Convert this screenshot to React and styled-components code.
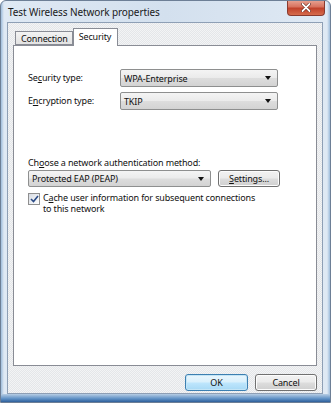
import React from "react";
import styled, { createGlobalStyle } from "styled-components";

const Global = createGlobalStyle`
  html, body { margin: 0; padding: 0; background: #ffffff; }
  body { font-family: "Noto Sans", "Open Sans", sans-serif; }
`;

const Window = styled.div`
  width: 331px;
  height: 403px;
  box-sizing: border-box;
  border: 1px solid #6d7f96;
  border-radius: 6px 6px 0 0;
  background: linear-gradient(90deg, #9fbddc 0px, #dfe9f4 3px, #d3e0ee 50%, #dfe9f4 calc(100% - 3px), #9fbddc 100%);
  display: flex;
  flex-direction: column;
  position: relative;
  overflow: hidden;
  &::after {
    content: "";
    position: absolute;
    left: 0; right: 0; bottom: 0; height: 8px;
    background: linear-gradient(180deg, #b7cde4 0%, #5d8fc4 60%, #2f5f9a 100%);
  }
`;

const TitleBar = styled.div`
  height: 21px;
  display: flex;
  align-items: flex-start;
  justify-content: space-between;
  padding-left: 7px;
  flex: none;
`;

const Title = styled.div`
  font-size: 10px;
  line-height: 11px;
  margin-top: 6px;
  color: #1a1a1a;
  letter-spacing: -0.1px;
`;

const CloseBtn = styled.div`
  width: 38px;
  height: 16px;
  margin-right: 5px;
  margin-top: -1px;
  border: 1px solid #8a3a2e;
  border-top: none;
  border-radius: 0 0 4px 4px;
  background: linear-gradient(180deg, #e8a696 0%, #d8735f 45%, #c0422b 55%, #d66c4d 100%);
  display: flex;
  align-items: center;
  justify-content: center;
  box-sizing: border-box;
`;

const Client = styled.div`
  flex: 1;
  margin: 0 7px 8px 6px;
  border: 1px solid #8e9fb5;
  background-color: #eceef0;
  background-image: repeating-conic-gradient(#f3f4f5 0 25%, #e4e6e9 0 50%);
  background-size: 2px 2px;
  display: flex;
  flex-direction: column;
  padding: 4px 5px 0 5px;
  font-size: 9px;
  letter-spacing: -0.15px;
`;

const TabStrip = styled.div`
  display: flex;
  align-items: flex-end;
  height: 18px;
  padding-left: 2px;
  position: relative;
  z-index: 1;
`;

const Tab = styled.div`
  font-size: 9px;
  color: #111;
  box-sizing: border-box;
  border: 1px solid #898c95;
  border-bottom: ${p => (p.$active ? "none" : "1px solid #898c95")};
  border-left: ${p => (p.$first || p.$active ? "1px solid #898c95" : "none")};
  background: ${p => (p.$active ? "#ffffff" : "linear-gradient(180deg, #f3f3f3, #e2e2e2)")};
  height: ${p => (p.$active ? "18px" : "14px")};
  padding: ${p => (p.$active ? "2px 6px 0 5px" : "1px 4px 0 5px")};
  margin-bottom: ${p => (p.$active ? "-1px" : "0")};
  line-height: 12px;
`;

const Panel = styled.div`
  height: 321px;
  box-sizing: border-box;
  border: 1px solid #898c95;
  background: #ffffff;
  padding: 23px 0 0 14px;
  display: flex;
  flex-direction: column;
`;

const FieldRow = styled.div`
  display: flex;
  align-items: center;
  height: 18px;
  margin-bottom: ${p => p.$gap || 0}px;
`;

const Label = styled.div`
  color: #111;
  width: ${p => p.$w || "auto"};
  margin-bottom: ${p => p.$mb || 0}px;
  line-height: 12px;
`;

const U = styled.span`
  text-decoration: underline;
  text-underline-offset: 1px;
`;

const Combo = styled.div`
  width: ${p => p.$w}px;
  height: ${p => p.$h || 18}px;
  box-sizing: border-box;
  border: 1px solid #8e8f8f;
  border-radius: 2px;
  background: linear-gradient(180deg, #f4f4f4 0%, #ebebeb 48%, #dddddd 52%, #d3d3d3 100%);
  display: flex;
  align-items: center;
  justify-content: space-between;
  padding: 0 6px 0 3px;
  color: #111;
`;

const Arrow = styled.div`
  width: 0;
  height: 0;
  border-left: 3.5px solid transparent;
  border-right: 3.5px solid transparent;
  border-top: 4px solid #111;
`;

const Spacer = styled.div`
  height: ${p => p.$h}px;
  flex: none;
`;

const Button = styled.div`
  width: ${p => p.$w}px;
  height: ${p => p.$h || 17}px;
  box-sizing: border-box;
  border: 1px solid ${p => (p.$default ? "#3c7fb1" : "#707070")};
  border-radius: 3px;
  background: ${p =>
    p.$default
      ? "linear-gradient(180deg, #eaf6fd 0%, #d9f0fc 48%, #bee6fd 52%, #a7d9f5 100%)"
      : "linear-gradient(180deg, #f2f2f2 0%, #ebebeb 48%, #dddddd 52%, #cfcfcf 100%)"};
  box-shadow: inset 0 0 0 1px ${p => (p.$default ? "#c4e5f6" : "#fcfcfc")};
  display: flex;
  align-items: center;
  justify-content: center;
  color: #111;
`;

const Row = styled.div`
  display: flex;
  align-items: center;
  gap: ${p => p.$gap || 0}px;
`;

const CheckRow = styled.div`
  display: flex;
  align-items: flex-start;
  gap: 3px;
  margin-top: 5px;
`;

const Check = styled.div`
  width: 12px;
  height: 12px;
  box-sizing: border-box;
  border: 1px solid #8f8f8f;
  background: linear-gradient(135deg, #d6dbe3, #ffffff);
  display: flex;
  align-items: center;
  justify-content: center;
  margin-top: 1px;
  flex: none;
`;

const CheckText = styled.div`
  line-height: 11px;
  color: #111;
`;

const ButtonBar = styled.div`
  flex: 1;
  display: flex;
  justify-content: flex-end;
  align-items: flex-start;
  gap: 7px;
  padding-top: 8px;
  padding-right: 0px;
`;

export default function App() {
  return (
    <>
      <Global />
      <Window>
        <TitleBar>
          <Title>Test Wireless Network properties</Title>
          <CloseBtn>
            <svg width="10" height="9" viewBox="0 0 10 9">
              <path d="M1.5 1 L8.5 8 M8.5 1 L1.5 8" stroke="#5a1a10" strokeWidth="3" strokeLinecap="round" />
              <path d="M1.5 1 L8.5 8 M8.5 1 L1.5 8" stroke="#ffffff" strokeWidth="1.8" strokeLinecap="round" />
            </svg>
          </CloseBtn>
        </TitleBar>
        <Client>
          <TabStrip>
            <Tab $first>Connection</Tab>
            <Tab $active>Security</Tab>
          </TabStrip>
          <Panel>
            <FieldRow $gap={5}>
              <Label $w="92px">Se<U>c</U>urity type:</Label>
              <Combo $w={158}>
                <span>WPA-Enterprise</span>
                <Arrow />
              </Combo>
            </FieldRow>
            <FieldRow>
              <Label $w="92px">E<U>n</U>cryption type:</Label>
              <Combo $w={158}>
                <span>TKIP</span>
                <Arrow />
              </Combo>
            </FieldRow>
            <Spacer $h={47} />
            <Label $mb={1}>Ch<U>o</U>ose a network authentication method:</Label>
            <Row $gap={7}>
              <Combo $w={183} $h={17}>
                <span>Protected EAP (PEAP)</span>
                <Arrow />
              </Combo>
              <Button $w={62} $h={17}><span><U>S</U>ettings...</span></Button>
            </Row>
            <CheckRow>
              <Check>
                <svg width="9" height="8" viewBox="0 0 9 8">
                  <path d="M1 4 L3.5 6.5 L8 1" stroke="#2a4a86" strokeWidth="1.6" fill="none" />
                </svg>
              </Check>
              <CheckText>
                C<U>a</U>che user information for subsequent connections
                <br />
                to this network
              </CheckText>
            </CheckRow>
          </Panel>
          <ButtonBar>
            <Button $default $w={63}>OK</Button>
            <Button $w={62}>Cancel</Button>
          </ButtonBar>
        </Client>
      </Window>
    </>
  );
}
